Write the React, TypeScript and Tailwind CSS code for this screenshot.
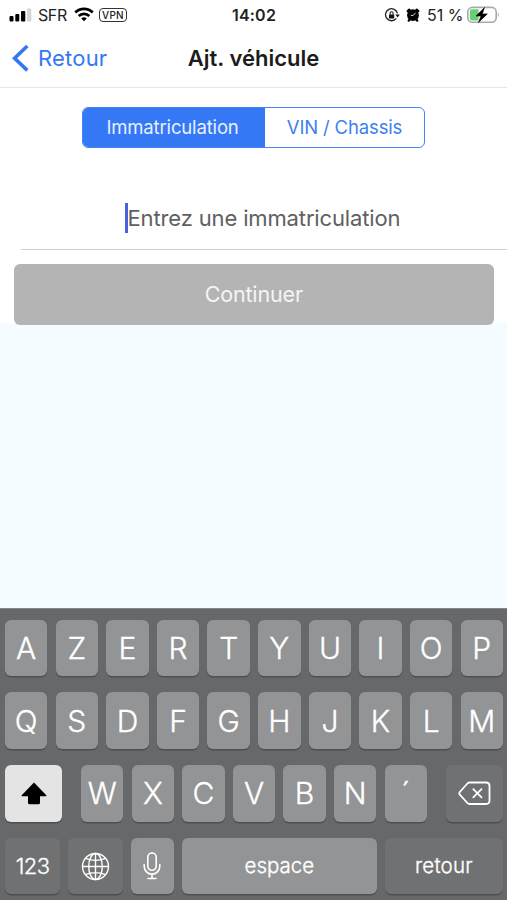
import { useState } from 'react'
import type { ReactNode } from 'react'

const rows = ['AZERTYUIOP', 'QSDFGHJKLM']
const letters = ['W', 'X', 'C', 'V', 'B', 'N', '´']

function Key({ className = '', children }: { className?: string; children: ReactNode }) {
  return (
    <button
      type="button"
      className={`flex h-[56.5px] items-center justify-center rounded-[6px] text-white shadow-[0_1.5px_0_#4e4f51] ${className}`}
    >
      {children}
    </button>
  )
}

function StatusBar() {
  return (
    <div className="flex h-[29px] items-center pl-[9px] pr-[7px] text-[16px] text-[#222]">
      <svg width="23" height="14" viewBox="0 0 23 14" className="shrink-0">
        <rect x="0.5" y="8" width="4" height="5.5" rx="1" fill="#000" />
        <rect x="6.3" y="6" width="4" height="7.5" rx="1" fill="#000" />
        <rect x="12" y="3" width="4.3" height="10.5" rx="1" fill="#000" />
        <rect x="18" y="0.5" width="4.3" height="13" rx="1" fill="#d4d4d4" />
      </svg>
      <span className="ml-[6px] w-[30px] text-[16px] tracking-[-0.4px]">SFR</span>
      <svg width="20" height="15" viewBox="0 0 20 15" className="ml-[6px] shrink-0" fill="none" stroke="#000">
        <path d="M1.3 5.5A12.4 12.4 0 0 1 18.7 5.5" strokeWidth="2.8" />
        <path d="M4.7 9A7.6 7.6 0 0 1 15.3 9" strokeWidth="2.6" />
        <path d="M10 14.3L7.2 11.5A4 4 0 0 1 12.8 11.5Z" fill="#000" stroke="none" />
      </svg>
      <span className="ml-[5px] flex h-[14px] w-[28px] items-center justify-center rounded-[4px] border-[1.5px] border-[#333] pt-px text-[10px] leading-none font-medium tracking-[0.3px]">
        VPN
      </span>
      <span className="ml-[105px] w-[46px] text-[16px] font-semibold tracking-[0.2px] whitespace-nowrap">14:02</span>
      <svg width="16" height="14" viewBox="0 0 16 14" className="ml-auto shrink-0" fill="none" stroke="#222">
        <path d="M13.4 5.4A6 6 0 1 0 12.3 10.4" strokeWidth="1.3" />
        <path d="M11.4 6.4H15.8L13.6 9.4Z" fill="#111" stroke="none" />
        <rect x="5" y="6.4" width="5.2" height="4" rx="0.6" fill="#111" stroke="none" />
        <path d="M6.1 6.7V5.2a1.5 1.5 0 0 1 3 0v1.5" strokeWidth="1.1" />
      </svg>
      <svg width="14" height="14" viewBox="0 0 14 14" className="ml-[6px] mr-px shrink-0">
        <circle cx="7" cy="7.2" r="5.9" fill="#000" />
        <path d="M1.8 3.2L3.4 1.7M12.2 3.2L10.6 1.7M2.8 12.6L4 11M11.2 12.6L10 11" stroke="#000" strokeWidth="2.4" strokeLinecap="round" />
        <path d="M7.2 7.4L9.6 4.8M7.2 7.4H4.8" stroke="#ddd" strokeWidth="1" />
      </svg>
      <span className="ml-[6px] w-[37px] text-[16px] whitespace-nowrap">51 %</span>
      <svg width="33" height="18" viewBox="0 0 33 18" className="ml-[3px] shrink-0">
        <rect x="0.8" y="1.4" width="28.4" height="14.8" rx="4.5" fill="none" stroke="#aaa" strokeWidth="1.6" />
        <path d="M5 3.2H11.5V14.4H5A2.2 2.2 0 0 1 2.8 12.2V5.4A2.2 2.2 0 0 1 5 3.2Z" fill="#65cf72" />
        <path d="M30.8 6.3Q32.8 8.8 30.8 11.3Z" fill="#aaa" />
        <path d="M17.5 1.5L9 10H14L11.5 16.5L20.3 7.9H15.3Z" fill="#000" stroke="#000" strokeWidth="0.6" strokeLinejoin="round" />
      </svg>
    </div>
  )
}

function Keyboard() {
  return (
    <div className="flex h-[292px] flex-col gap-[16.3px] border-t border-[#858688] bg-[#66686a] pt-[10.5px] pl-[5px] pr-[4px]">
      {rows.map(row => (
        <div key={row} className="grid grid-cols-10 gap-[8.2px]">
          {row.split('').map(l => (
            <Key key={l} className="bg-[#939495] pt-px text-[30px] font-light [-webkit-text-stroke:0.35px_#fff]">{l}</Key>
          ))}
        </div>
      ))}
      <div className="flex justify-between">
        <Key className="w-[57px] bg-[#e4e4e4]">
          <svg width="26" height="23" viewBox="0 0 26 23">
            <path d="M13 0.6L25.3 13.2Q25.9 14.2 24.8 14.2H19V20.7Q19 22.3 17.4 22.3H8.6Q7 22.3 7 20.7V14.2H1.2Q0.1 14.2 0.7 13.2Z" fill="#000" />
          </svg>
        </Key>
        <div className="flex gap-[8.2px]">
          {letters.map(l => (
            <Key key={l} className="w-[42.4px] bg-[#939495] pt-px text-[30px] font-light [-webkit-text-stroke:0.35px_#fff]">{l}</Key>
          ))}
        </div>
        <Key className="w-[57px] bg-[#707172]">
          <svg width="33" height="25" viewBox="0 0 33 25" fill="none" stroke="#fff" strokeWidth="1.8" strokeLinecap="round" strokeLinejoin="round">
            <path d="M11.5 1.5H28Q31.5 1.5 31.5 5V19.5Q31.5 23 28 23H11.5Q10.3 23 9.4 22L1.8 13.7Q0.8 12.3 1.8 11L9.4 2.5Q10.3 1.5 11.5 1.5Z" />
            <path d="M15.3 8.2L23.5 16.4M23.5 8.2L15.3 16.4" />
          </svg>
        </Key>
      </div>
      <div className="flex gap-[7.8px]">
        <Key className="w-[55.3px] bg-[#707172] pt-px text-[22px] font-light tracking-[-0.6px] [-webkit-text-stroke:0.3px_#fff]">123</Key>
        <Key className="w-[55.3px] bg-[#707172]">
          <svg width="29" height="29" viewBox="0 0 29 29" fill="none" stroke="#fff" strokeWidth="1.4">
            <circle cx="14.5" cy="14.5" r="13" />
            <ellipse cx="14.5" cy="14.5" rx="6.8" ry="13" />
            <path d="M14.5 1.5V27.5M1.5 14.5H27.5M4.5 6.3Q14.5 10.5 24.5 6.3M4.5 22.7Q14.5 18.5 24.5 22.7" />
          </svg>
        </Key>
        <Key className="w-[42.6px] bg-[#939495]">
          <svg width="18" height="28" viewBox="0 0 18 28" fill="none" stroke="#fff" strokeWidth="1.6" strokeLinecap="round">
            <rect x="4.8" y="1" width="8.4" height="17.3" rx="4.2" />
            <path d="M1.2 12.5V14.3A7.8 7.8 0 0 0 16.8 14.3V12.5M9 22.2V26.5M5 26.5H13" />
          </svg>
        </Key>
        <Key className="w-[195.5px] bg-[#939495] text-[20.5px] font-light [-webkit-text-stroke:0.35px_#fff]">espace</Key>
        <Key className="flex-1 bg-[#707172] text-[20.5px] font-light tracking-[0.2px] [-webkit-text-stroke:0.35px_#fff]">retour</Key>
      </div>
    </div>
  )
}

export default function App() {
  const [tab, setTab] = useState('plate')
  const [plate, setPlate] = useState('')

  return (
    <main className="flex h-[900px] w-[507px] flex-col overflow-hidden bg-[#f5fcff] font-['Inter','Liberation_Sans',sans-serif]">
      <header className="h-[88px] border-b border-[#e6e6e6] bg-white">
        <StatusBar />
        <div className="grid h-[58px] grid-cols-[1fr_auto_1fr] items-center px-[12px]">
          <button type="button" className="flex items-center gap-[9px] text-[22px] text-[#3478f0]">
            <svg width="17" height="29" viewBox="0 0 17 29" fill="none" stroke="currentColor" strokeWidth="3.6">
              <path d="M15.3 2L2.6 14.2L15.3 26.4" strokeLinecap="butt" strokeLinejoin="miter" />
            </svg>
            <span className="tracking-[0.2px]">Retour</span>
          </button>
          <h1 className="text-[22px] font-[580] text-[#1c1c1c]">Ajt. véhicule</h1>
        </div>
      </header>
      <section className="flex h-[235px] flex-col bg-white pt-[19px]">
        <div className="ml-[82px] flex h-[41px] w-[343px] shrink-0 overflow-hidden rounded-[6px] border-[1.5px] border-[#4584f1] text-[18.5px] tracking-[-0.15px]">
          <button type="button" onClick={() => setTab('plate')} className={`w-[182px] pr-[3px] ${tab === 'plate' ? 'bg-[#3478f6] text-[#e9f1ff]' : 'text-[#3f80f2]'}`}>
            Immatriculation
          </button>
          <button type="button" onClick={() => setTab('vin')} className={`flex-1 ${tab === 'vin' ? 'bg-[#3478f6] text-[#e9f1ff]' : 'text-[#3f80f2]'}`}>
            VIN / Chassis
          </button>
        </div>
        <label className="ml-[21px] mt-[40px] flex h-[62px] shrink-0 items-center border-b-[1.5px] border-[#d0d0d0] pl-[104px]">
          <span className="mb-px h-[30px] w-[2.5px] bg-[#4663dc]" />
          <input
            className="w-[300px] text-[22px] tracking-[-0.14px] outline-none placeholder:text-[#606060] placeholder:opacity-100"
            placeholder="Entrez une immatriculation"
            value={plate}
            onChange={e => setPlate(e.target.value)}
          />
        </label>
        <button type="button" className="ml-[14px] mt-[14px] h-[60.5px] w-[479.5px] shrink-0 rounded-[6px] bg-[#b4b4b4] text-[21.5px] tracking-[-0.15px] text-[#f5f5f5]">
          Continuer
        </button>
      </section>
      <div className="flex-1" />
      <Keyboard />
    </main>
  )
}
